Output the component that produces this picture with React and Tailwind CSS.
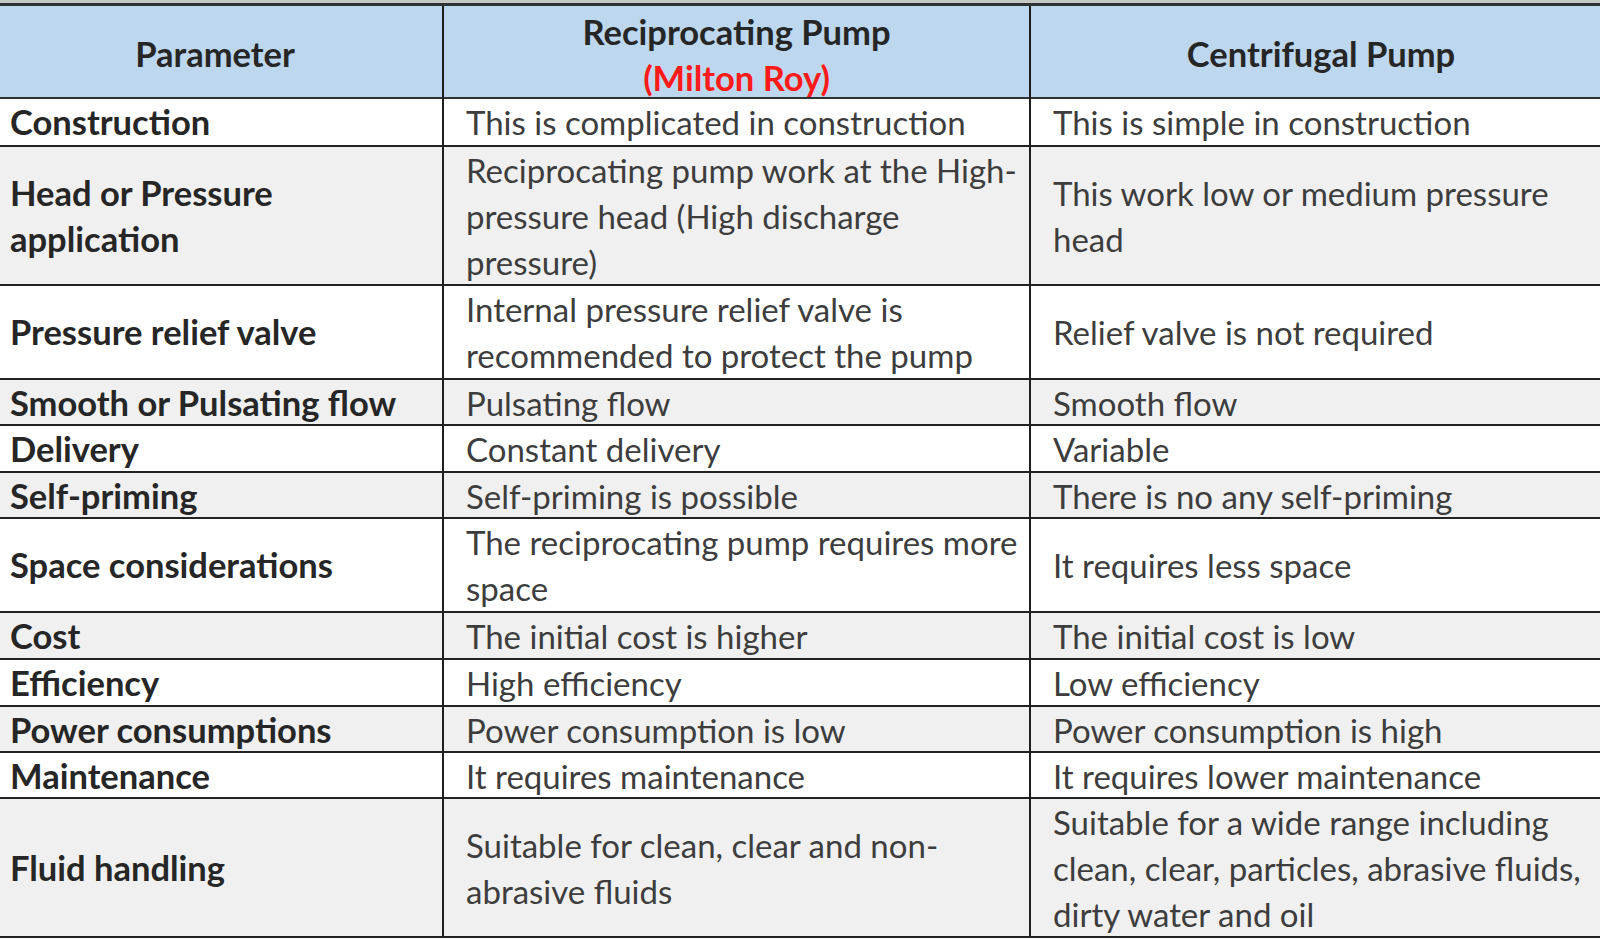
import React from "react";

const F = { fontFamily: "Lato, 'Open Sans', sans-serif" };

const rows = [
  { h: "h-[48px]", bg: "bg-white", p: ["Construction"], a: ["This is complicated in construction"], b: ["This is simple in construction"] },
  { h: "h-[139px]", bg: "bg-[#f0f0f0]", p: ["Head or Pressure", "application"], a: ["Reciprocating pump work at the High-", "pressure head (High discharge", "pressure)"], b: ["This work low or medium pressure", "head"] },
  { h: "h-[94px]", bg: "bg-white", p: ["Pressure relief valve"], a: ["Internal pressure relief valve is", "recommended to protect the pump"], b: ["Relief valve is not required"] },
  { h: "h-[46px]", bg: "bg-[#f0f0f0]", p: ["Smooth or Pulsating flow"], a: ["Pulsating flow"], b: ["Smooth flow"] },
  { h: "h-[47px]", bg: "bg-white", p: ["Delivery"], a: ["Constant delivery"], b: ["Variable"] },
  { h: "h-[46px]", bg: "bg-[#f0f0f0]", p: ["Self-priming"], a: ["Self-priming is possible"], b: ["There is no any self-priming"] },
  { h: "h-[94px]", bg: "bg-white", p: ["Space considerations"], a: ["The reciprocating pump requires more", "space"], b: ["It requires less space"] },
  { h: "h-[47px]", bg: "bg-[#f0f0f0]", p: ["Cost"], a: ["The initial cost is higher"], b: ["The initial cost is low"] },
  { h: "h-[47px]", bg: "bg-white", p: ["Efficiency"], a: ["High efficiency"], b: ["Low efficiency"] },
  { h: "h-[46px]", bg: "bg-[#f0f0f0]", p: ["Power consumptions"], a: ["Power consumption is low"], b: ["Power consumption is high"] },
  { h: "h-[46px]", bg: "bg-white", p: ["Maintenance"], a: ["It requires maintenance"], b: ["It requires lower maintenance"] },
  { h: "h-[139px]", bg: "bg-[#f0f0f0]", p: ["Fluid handling"], a: ["Suitable for clean, clear and non-", "abrasive fluids"], b: ["Suitable for a wide range including", "clean, clear, particles, abrasive fluids,", "dirty water and oil"] },
];

function Lines({ lines }) {
  return (
    <div className="leading-[46px] whitespace-nowrap">
      {lines.map((l, i) => (
        <div key={i}>{l}</div>
      ))}
    </div>
  );
}

export default function App() {
  return (
    <div className="w-[1600px] h-[940px] overflow-hidden bg-white" style={F}>
      <div className="w-[1623px] -ml-[12px]">
        <div className="h-[3px] bg-[#c6c6c6]" />
        <div className="grid grid-cols-[456px_587px_580px] h-[96px] border-t-[3px] border-b-2 border-[#2e3232] bg-[#bdd7ee] text-[34.5px] font-bold text-[#262626]">
          <div className="flex items-center justify-center border-r-2 border-[#1e1e1e]">Parameter</div>
          <div className="flex flex-col items-center justify-center border-r-2 border-[#1e1e1e] leading-[46px] pt-[3px]">
            <div>Reciprocating Pump</div>
            <div className="text-[#ff1a1a]">(Milton Roy)</div>
          </div>
          <div className="flex items-center justify-center">Centrifugal Pump</div>
        </div>
        {rows.map((r, i) => (
          <div key={i} className={`grid grid-cols-[456px_587px_580px] border-b-2 border-[#222] ${r.h} ${r.bg}`}>
            <div className="flex items-center pl-[22px] border-r-2 border-[#1e1e1e] font-bold text-[34.5px] text-[#262626]">
              <Lines lines={r.p} />
            </div>
            <div className="flex items-center pl-[22px] border-r-2 border-[#1e1e1e] text-[33px] text-[#3d3d3d]">
              <Lines lines={r.a} />
            </div>
            <div className="flex items-center pl-[22px] text-[33px] text-[#3d3d3d]">
              <Lines lines={r.b} />
            </div>
          </div>
        ))}
      </div>
    </div>
  );
}
